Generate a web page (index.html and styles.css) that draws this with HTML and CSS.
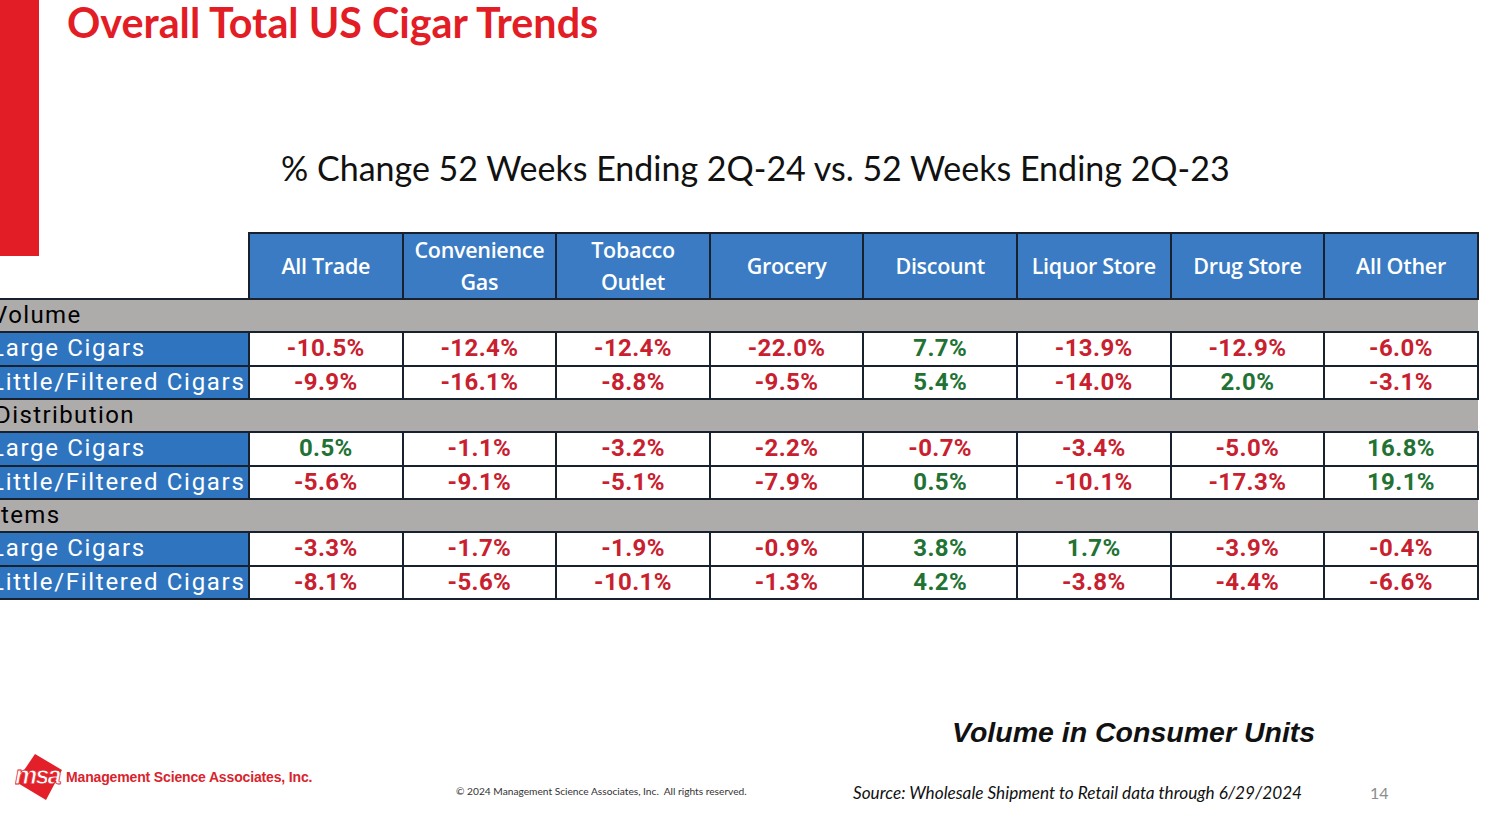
FILE: index.html
```html
<!DOCTYPE html>
<html>
<head>
<meta charset="utf-8">
<link rel="stylesheet" href="styles.css">
</head>
<body>
<div class="slide">
  <div class="accent"></div>
  <h1 class="title">Overall Total US Cigar Trends</h1>
  <h2 class="subtitle">% Change 52 Weeks Ending 2Q-24 vs. 52 Weeks Ending 2Q-23</h2>
  <table class="grid">
    <colgroup>
      <col class="c-label">
      <col class="c-val"><col class="c-val"><col class="c-val"><col class="c-val">
      <col class="c-val"><col class="c-val"><col class="c-val"><col class="c-val">
    </colgroup>
    <thead>
      <tr class="head">
        <th class="corner"></th>
        <th>All Trade</th>
        <th>Convenience<br>Gas</th>
        <th>Tobacco<br>Outlet</th>
        <th>Grocery</th>
        <th>Discount</th>
        <th>Liquor Store</th>
        <th>Drug Store</th>
        <th>All Other</th>
      </tr>
    </thead>
    <tbody>
      <tr class="sec"><td colspan="9"><span class="sec-l">Volume</span></td></tr>
      <tr class="row">
        <td class="lab">Large Cigars</td>
        <td class="neg">-10.5%</td><td class="neg">-12.4%</td><td class="neg">-12.4%</td><td class="neg">-22.0%</td>
        <td class="pos">7.7%</td><td class="neg">-13.9%</td><td class="neg">-12.9%</td><td class="neg">-6.0%</td>
      </tr>
      <tr class="row">
        <td class="lab">Little/Filtered Cigars</td>
        <td class="neg">-9.9%</td><td class="neg">-16.1%</td><td class="neg">-8.8%</td><td class="neg">-9.5%</td>
        <td class="pos">5.4%</td><td class="neg">-14.0%</td><td class="pos">2.0%</td><td class="neg">-3.1%</td>
      </tr>
      <tr class="sec"><td colspan="9"><span class="sec-l dist">Distribution</span></td></tr>
      <tr class="row">
        <td class="lab">Large Cigars</td>
        <td class="pos">0.5%</td><td class="neg">-1.1%</td><td class="neg">-3.2%</td><td class="neg">-2.2%</td>
        <td class="neg">-0.7%</td><td class="neg">-3.4%</td><td class="neg">-5.0%</td><td class="pos">16.8%</td>
      </tr>
      <tr class="row">
        <td class="lab">Little/Filtered Cigars</td>
        <td class="neg">-5.6%</td><td class="neg">-9.1%</td><td class="neg">-5.1%</td><td class="neg">-7.9%</td>
        <td class="pos">0.5%</td><td class="neg">-10.1%</td><td class="neg">-17.3%</td><td class="pos">19.1%</td>
      </tr>
      <tr class="sec"><td colspan="9"><span class="sec-l items">Items</span></td></tr>
      <tr class="row">
        <td class="lab">Large Cigars</td>
        <td class="neg">-3.3%</td><td class="neg">-1.7%</td><td class="neg">-1.9%</td><td class="neg">-0.9%</td>
        <td class="pos">3.8%</td><td class="pos">1.7%</td><td class="neg">-3.9%</td><td class="neg">-0.4%</td>
      </tr>
      <tr class="row">
        <td class="lab">Little/Filtered Cigars</td>
        <td class="neg">-8.1%</td><td class="neg">-5.6%</td><td class="neg">-10.1%</td><td class="neg">-1.3%</td>
        <td class="pos">4.2%</td><td class="neg">-3.8%</td><td class="neg">-4.4%</td><td class="neg">-6.6%</td>
      </tr>
    </tbody>
  </table>

  <div class="units">Volume in Consumer Units</div>

  <div class="footer">
    <div class="brand">
      <svg class="logo" width="52" height="52" viewBox="0 0 52 52">
        <polygon points="20,1 47,17 31,47 1,29" fill="#e3202a"/>
        <text x="0" y="31" class="logo-t">msa</text>
      </svg>
      <span class="brand-name">Management Science Associates, Inc.</span>
    </div>
    <div class="copy">© 2024 Management Science Associates, Inc.&nbsp; All rights reserved.</div>
    <div class="source">Source: Wholesale Shipment to Retail data through 6/29/2024</div>
    <div class="page">14</div>
  </div>
</div>
</body>
</html>
```

FILE: styles.css
```css
html, body {
  margin: 0;
  padding: 0;
  background: #ffffff;
}

.slide {
  position: relative;
  width: 1490px;
  height: 819px;
  overflow: hidden;
  background: #ffffff;
  font-family: Lato, "Open Sans", sans-serif;
}

.accent {
  position: absolute;
  left: 0;
  top: 0;
  width: 39px;
  height: 256px;
  background: #e31d25;
}

.title {
  margin: 0;
  padding: 0 0 0 67px;
  font-family: Lato, sans-serif;
  font-weight: 700;
  font-size: 41.3px;
  line-height: 44px;
  color: #e31d25;
}

.subtitle {
  margin: 0;
  padding: 106px 0 0 281px;
  font-family: Lato, sans-serif;
  font-weight: 400;
  font-size: 34px;
  line-height: 36px;
  color: #111111;
}

.grid {
  margin-top: 46px;
  border-collapse: collapse;
  table-layout: fixed;
  width: 1478px;
}

.c-label { width: 249px; }
.c-val { width: 153.6px; }

.head th {
  height: 64px;
  padding: 0;
  background: #3a7bc3;
  border: 2px solid #18222e;
  color: #ffffff;
  font-family: "Open Sans", sans-serif;
  font-weight: 600;
  font-size: 21.5px;
  letter-spacing: -0.3px;
  line-height: 32px;
  text-align: center;
}

.head th.corner {
  background: #ffffff;
  border: none;
  border-bottom: 2px solid #18222e;
}

.sec td {
  height: 31.32px;
  padding: 0;
  background: #aeabab;
  border-top: 2px solid #18222e;
  border-bottom: 2px solid #18222e;
  border-left: none;
  border-right: none;
  font-family: Roboto, sans-serif;
  font-size: 24px;
  letter-spacing: 1.4px;
  color: #000000;
  white-space: nowrap;
  overflow: hidden;
}

.sec-l {
  display: inline-block;
  margin-left: -8px;
  line-height: 31px;
}

.sec-l.dist { margin-left: -5px; }
.sec-l.items { margin-left: -7px; }

.row td {
  height: 31.32px;
  padding: 0;
  border: 2px solid #18222e;
  background: #ffffff;
  text-align: center;
  font-family: Roboto, sans-serif;
  font-weight: 700;
  font-size: 24px;
  letter-spacing: 0.4px;
  line-height: 31px;
}

.row td.lab {
  border-left: none;
  background: #2f74be;
  color: #ffffff;
  text-align: left;
  font-weight: 400;
  font-size: 24px;
  letter-spacing: 1.7px;
  text-indent: -9px;
  white-space: nowrap;
  overflow: hidden;
}

.neg { color: #c8202e; }
.pos { color: #227234; }

.units {
  margin-top: 116px;
  padding-left: 952px;
  font-family: "Liberation Sans", Arial, sans-serif;
  font-weight: 700;
  font-style: italic;
  font-size: 28.5px;
  line-height: 32px;
  color: #111111;
}

.footer {
  display: grid;
  grid-template-columns: 456px 397px 517px 1fr;
  align-items: end;
  margin-top: 5px;
}

.brand {
  display: flex;
  align-items: center;
  padding-left: 15px;
}

.logo {
  display: block;
  flex: none;
}

.logo-t {
  font-family: "Liberation Sans", Arial, sans-serif;
  font-weight: 700;
  font-style: italic;
  font-size: 25px;
  fill: #ffffff;
  stroke: #e3202a;
  stroke-width: 0.8px;
  letter-spacing: -1.8px;
}

.brand-name {
  margin-left: -1px;
  margin-bottom: 4px;
  font-family: "Liberation Sans", Arial, sans-serif;
  font-weight: 700;
  font-size: 14px;
  letter-spacing: -0.15px;
  color: #d9232d;
}

.copy {
  padding-bottom: 8px;
  font-family: Lato, sans-serif;
  font-size: 10.2px;
  color: #333333;
}

.source {
  padding-bottom: 2px;
  font-family: Lato, sans-serif;
  font-style: italic;
  font-size: 17.2px;
  color: #111111;
}

.page {
  padding-bottom: 3px;
  font-family: Lato, sans-serif;
  font-size: 16px;
  color: #8c8c8c;
}
```
